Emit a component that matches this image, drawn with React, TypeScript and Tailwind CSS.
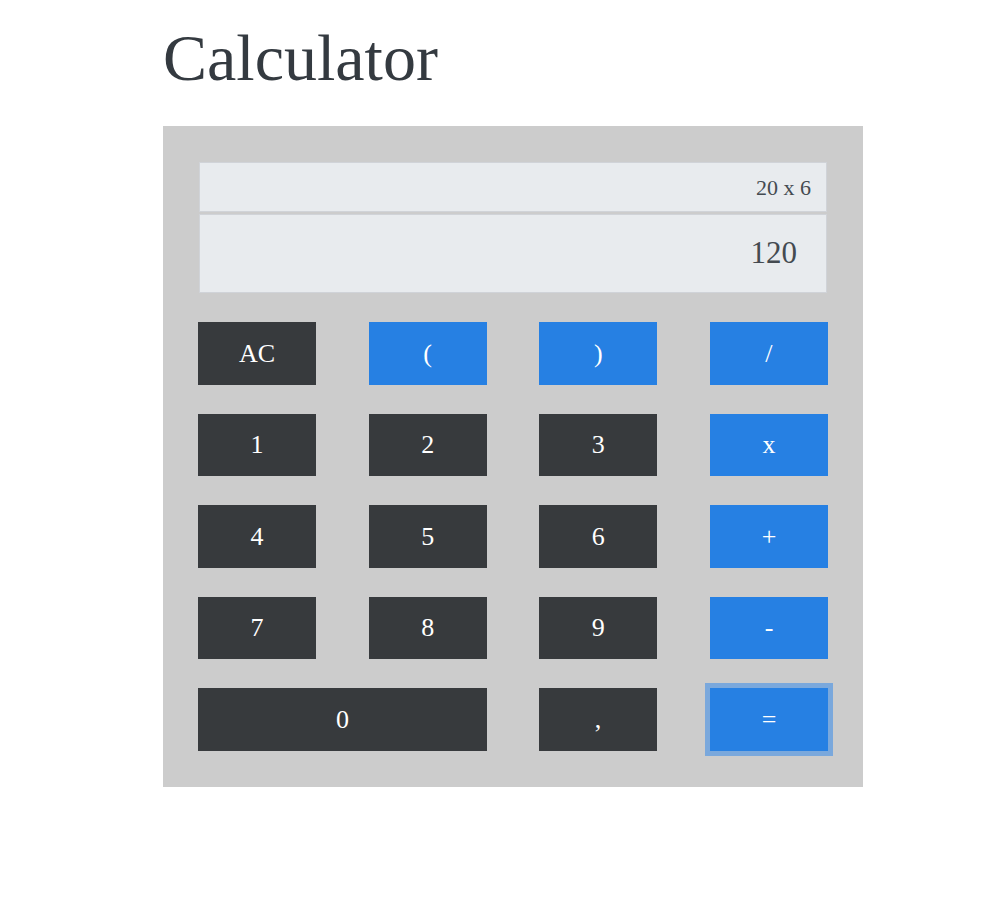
export default function App() {
  const rows: { label: string; kind: 'dark' | 'blue' }[][] = [
    [
      { label: 'AC', kind: 'dark' },
      { label: '(', kind: 'blue' },
      { label: ')', kind: 'blue' },
      { label: '/', kind: 'blue' },
    ],
    [
      { label: '1', kind: 'dark' },
      { label: '2', kind: 'dark' },
      { label: '3', kind: 'dark' },
      { label: 'x', kind: 'blue' },
    ],
    [
      { label: '4', kind: 'dark' },
      { label: '5', kind: 'dark' },
      { label: '6', kind: 'dark' },
      { label: '+', kind: 'blue' },
    ],
    [
      { label: '7', kind: 'dark' },
      { label: '8', kind: 'dark' },
      { label: '9', kind: 'dark' },
      { label: '-', kind: 'blue' },
    ],
  ];

  const btn = (kind: 'dark' | 'blue') =>
    kind === 'dark' ? 'bg-[#373a3d] text-white' : 'bg-[#2680e3] text-white';

  return (
    <div className="min-h-screen bg-white font-['Liberation_Serif',serif]">
      <div className="ml-[163px] w-[700px] pt-[25px]">
        {/* Title */}
        <h1 className="text-[66px] leading-none text-[#343a40]">Calculator</h1>

        {/* Calculator body */}
        <div className="mt-[35px] bg-[#cccccc] px-[35px] pt-[36px] pb-[36px]">
          {/* Display */}
          <div className="flex flex-col gap-[2px] px-px">
            <div className="flex h-[50px] items-center justify-end border border-[#d0d3d8] bg-[#e8ebee] pr-[15px] text-[22px] text-[#444a50]">
              20 x 6
            </div>
            <div className="flex h-[79px] items-center justify-end border border-[#d0d3d8] bg-[#e8ebee] pr-[29px] text-[31px] text-[#444a50]">
              120
            </div>
          </div>

          {/* Keys */}
          <div className="mt-[29px] flex flex-col gap-[29px]">
            {rows.map((row, i) => (
              <div key={i} className="flex justify-between">
                {row.map((k) => (
                  <button
                    key={k.label}
                    className={`flex h-[62.5px] w-[118px] items-center justify-center text-[26px] ${btn(k.kind)}`}
                  >
                    {k.label}
                  </button>
                ))}
              </div>
            ))}
            <div className="flex justify-between">
              <button className="flex h-[62.5px] w-[289px] items-center justify-center bg-[#373a3d] text-[26px] text-white">
                0
              </button>
              <div className="flex gap-[53px]">
                <button className="flex h-[62.5px] w-[118px] items-center justify-center bg-[#373a3d] text-[26px] text-white">
                  ,
                </button>
                <button className="flex h-[62.5px] w-[118px] items-center justify-center bg-[#2680e3] text-[26px] text-white shadow-[0_0_0_5px_#7aa8dc]">
                  =
                </button>
              </div>
            </div>
          </div>
        </div>
      </div>
    </div>
  );
}
